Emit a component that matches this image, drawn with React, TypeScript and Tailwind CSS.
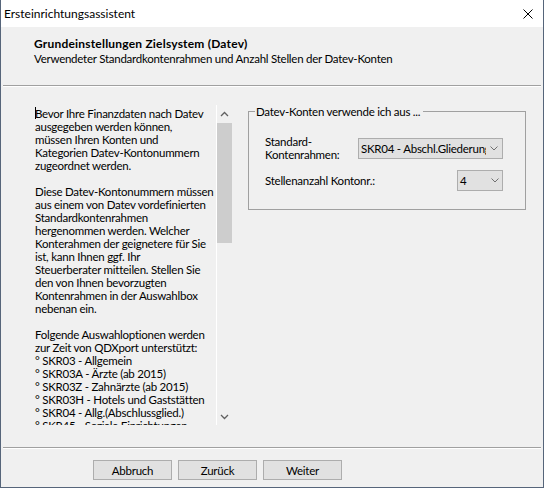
import React from "react";

const lines: string[] = [
  "Bevor Ihre Finanzdaten nach Datev",
  "ausgegeben werden können,",
  "müssen Ihren Konten und",
  "Kategorien Datev-Kontonummern",
  "zugeordnet werden.",
  "",
  "Diese Datev-Kontonummern müssen",
  "aus einem von Datev vordefinierten",
  "Standardkontenrahmen",
  "hergenommen werden. Welcher",
  "Konterahmen der geignetere für Sie",
  "ist, kann Ihnen ggf. Ihr",
  "Steuerberater mitteilen. Stellen Sie",
  "den von Ihnen bevorzugten",
  "Kontenrahmen in der Auswahlbox",
  "nebenan ein.",
  "",
  "Folgende Auswahloptionen werden",
  "zur Zeit von QDXport unterstützt:",
  "° SKR03 - Allgemein",
  "° SKR03A - Ärzte (ab 2015)",
  "° SKR03Z - Zahnärzte (ab 2015)",
  "° SKR03H - Hotels und Gaststätten",
  "° SKR04 - Allg.(Abschlussglied.)",
  "° SKR45 - Soziale Einrichtungen",
  "° SKR49 - Vereine",
  "° SKR51 - Landwirtschaft",
];

function Chevron({ up = false }: { up?: boolean }) {
  return (
    <svg width="9" height="6" viewBox="0 0 9 6" className="block">
      <polyline
        points={up ? "1,5 4.5,1.5 8,5" : "1,1 4.5,4.5 8,1"}
        fill="none"
        stroke="#606060"
        strokeWidth="1.3"
      />
    </svg>
  );
}

function ComboChevron() {
  return (
    <svg width="8" height="5" viewBox="0 0 8 5" className="block">
      <polyline points="0.5,0.5 4,4 7.5,0.5" fill="none" stroke="#707070" strokeWidth="1" />
    </svg>
  );
}

export default function App() {
  return (
    <div className="w-[544px] h-[488px] flex flex-col bg-[#f0f0f0] border-x border-b border-[#56657a] overflow-hidden text-[11.5px] tracking-[-0.25px] leading-[13px] text-black [font-family:Lato,'Noto_Sans',sans-serif]">
      {/* Title bar */}
      <div className="h-[27px] shrink-0 bg-white flex items-center justify-between pl-[3px] pr-[10px]">
        <span className="text-[12px] tracking-normal leading-[15px] -mt-px">Ersteinrichtungsassistent</span>
        <svg width="10" height="10" viewBox="0 0 10 10" className="block">
          <line x1="0.5" y1="0.5" x2="9.5" y2="9.5" stroke="#000" strokeWidth="1" />
          <line x1="9.5" y1="0.5" x2="0.5" y2="9.5" stroke="#000" strokeWidth="1" />
        </svg>
      </div>

      {/* Header */}
      <div className="h-[58px] shrink-0 pl-[33px] pt-[10px] flex flex-col">
        <div className="font-bold text-[12px] tracking-[0.2px]">Grundeinstellungen Zielsystem (Datev)</div>
        <div className="mt-[2px]">Verwendeter Standardkontenrahmen und Anzahl Stellen der Datev-Konten</div>
      </div>

      {/* Separator */}
      <div className="mx-[2px] shrink-0">
        <div className="h-px bg-[#a0a0a0]" />
        <div className="h-px bg-white" />
      </div>

      {/* Body */}
      <div className="h-[360px] shrink-0 flex items-start">
        {/* Text box */}
        <div className="ml-[32px] mt-[18px] w-[199px] h-[320px] flex">
          <div className="w-[183px] h-full overflow-hidden pl-[2px] pt-[2px]">
            {lines.map((l, i) => (
              <div key={i} className="h-[13px] whitespace-nowrap">
                {i === 0 ? (
                  <>
                    <span className="inline-block w-px h-[12px] bg-black align-top -mr-px" />
                    {l}
                  </>
                ) : (
                  l
                )}
              </div>
            ))}
          </div>
          <div className="w-[16px] h-full border-l border-white flex flex-col">
            <div className="h-[17px] flex items-center justify-center">
              <Chevron up />
            </div>
            <div className="mt-px h-[120px] bg-[#cdcdcd]" />
            <div className="flex-1" />
            <div className="h-[17px] flex items-center justify-center">
              <Chevron />
            </div>
          </div>
        </div>

        {/* Group box */}
        <fieldset className="ml-[16px] mt-[18px] w-[278px] h-[105px] border border-[#a0a0a0] px-0 pb-0 m-0">
          <legend className="ml-[6px] pl-[1px] pr-[3px] leading-[13px]">Datev-Konten verwende ich aus ...</legend>
          <div className="pl-[16px] pr-[22px] pt-[17px] flex flex-col">
            <div className="h-[26px] flex items-center justify-between">
              <div className="leading-[13px]">
                <div>Standard-</div>
                <div>Kontenrahmen:</div>
              </div>
              <div className="w-[145px] h-[21px] bg-[#e1e1e1] border border-[#adadad] flex items-center">
                <div className="w-[127px] pl-[2px] overflow-hidden whitespace-nowrap">SKR04 - Abschl.Gliederung</div>
                <div className="flex-1 flex justify-center">
                  <ComboChevron />
                </div>
              </div>
            </div>
            <div className="mt-[9px] h-[21px] flex items-center justify-between">
              <div>Stellenanzahl Kontonr.:</div>
              <div className="w-[46px] h-[21px] bg-[#e1e1e1] border border-[#adadad] flex items-center">
                <div className="pl-[2px] w-[29px]">4</div>
                <div className="flex-1 flex justify-center">
                  <ComboChevron />
                </div>
              </div>
            </div>
          </div>
        </fieldset>
      </div>

      {/* Bottom separator */}
      <div className="mx-[2px] shrink-0">
        <div className="h-px bg-[#a0a0a0]" />
        <div className="h-px bg-white" />
      </div>

      {/* Buttons */}
      <div className="flex-1 flex items-start pt-[11px] pl-[92px] gap-[6px]">
        {["Abbruch", "Zurück", "Weiter"].map((b) => (
          <div
            key={b}
            className="w-[79px] h-[20px] bg-[#e1e1e1] border border-[#adadad] flex items-center justify-center"
          >
            {b}
          </div>
        ))}
      </div>
    </div>
  );
}
